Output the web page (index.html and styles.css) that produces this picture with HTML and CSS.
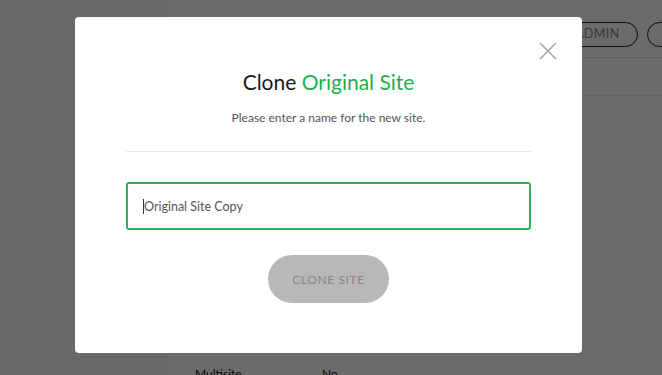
FILE: index.html
```html
<!DOCTYPE html>
<html>
<head>
<meta charset="utf-8">
<link rel="stylesheet" href="styles.css">
</head>
<body>
<div class="page">
  <aside class="sidebar"></aside>
  <main class="main">
    <header class="topbar">
      <span class="pill">ADMIN</span>
      <span class="pill pill-empty"></span>
    </header>
    <div class="subbar"></div>
    <div class="rows">
      <div class="row"><span class="label">Multisite</span><span class="value">No</span></div>
    </div>
  </main>
</div>
<div class="overlay">
  <div class="modal">
    <button class="close" aria-label="Close">
      <svg width="18" height="18" viewBox="0 0 18 18"><path d="M1 1L17 17M17 1L1 17" stroke="#a6a6a6" stroke-width="1.6" fill="none"/></svg>
    </button>
    <h1 class="title">Clone <span class="accent">Original Site</span></h1>
    <p class="subtitle">Please enter a name for the new site.</p>
    <hr class="divider">
    <div class="field"><span class="caret"></span><span class="field-text">Original Site Copy</span></div>
    <div class="actions"><button class="btn">CLONE SITE</button></div>
  </div>
</div>
</body>
</html>
```
FILE: styles.css
```css
* { box-sizing: border-box; }
html, body { margin: 0; padding: 0; }
body {
  width: 662px;
  height: 375px;
  overflow: hidden;
  font-family: Lato, "Noto Sans", sans-serif;
  background: #fff;
}
.page {
  display: flex;
  height: 375px;
}
.sidebar {
  width: 168px;
  flex: none;
  background: #fbfbfb;
  border-right: 1px solid #f0f0f0;
}
.main {
  flex: 1;
  display: flex;
  flex-direction: column;
  overflow: hidden;
}
.topbar {
  height: 58px;
  border-bottom: 1px solid #e2e2e2;
  display: flex;
  align-items: flex-start;
  padding-top: 22px;
  padding-left: 392px;
  gap: 9px;
}
.pill {
  flex: none;
  height: 25px;
  border: 1.5px solid #222;
  border-radius: 13px;
  padding: 0 17px 0 14px;
  font-size: 12.5px;
  line-height: 22px;
  letter-spacing: 0.4px;
  color: #888;
}
.pill-empty { width: 60px; }
.subbar {
  height: 38px;
  border-bottom: 1px solid #e6e6e6;
}
.rows {
  flex: 1;
  display: flex;
  flex-direction: column;
  justify-content: flex-end;
}
.row {
  display: flex;
  padding-left: 27px;
  margin-bottom: -6px;
  font-size: 12px;
  color: #111;
  height: 15px;
}
.label { width: 127px; }
.overlay {
  position: fixed;
  inset: 0;
  background: rgba(0, 0, 0, 0.58);
}
.modal {
  position: absolute;
  left: 75px;
  top: 17px;
  width: 507px;
  height: 336px;
  background: #fff;
  border-radius: 4px;
  padding: 52px 51px 0;
  text-align: center;
}
.close {
  position: absolute;
  top: 25px;
  right: 25px;
  width: 18px;
  height: 18px;
  padding: 0;
  border: 0;
  background: none;
}
.close svg { display: block; }
.title {
  margin: 0;
  font-size: 21px;
  font-weight: 400;
  color: #1a1a1a;
  line-height: 26px;
}
.accent { color: #20b14d; }
.subtitle {
  margin: 15px 0 0;
  font-size: 12px;
  color: #555;
  line-height: 16px;
}
.divider {
  border: 0;
  border-top: 1px solid #e6e6e6;
  margin: 25px 0 0;
}
.field {
  margin-top: 30px;
  height: 48px;
  border: 2px solid #2db55d;
  border-radius: 3px;
  display: flex;
  align-items: center;
  padding-left: 15px;
  font-size: 12.5px;
  color: #555;
  text-align: left;
}
.caret {
  width: 1px;
  height: 15px;
  background: #333;
}
.actions {
  margin-top: 25px;
  display: flex;
  justify-content: center;
}
.btn {
  width: 121px;
  height: 48px;
  border: 0;
  border-radius: 24px;
  background: #bab7b7;
  color: #898787;
  font-family: Lato, "Noto Sans", sans-serif;
  font-size: 12px;
  letter-spacing: 0.6px;
}
```
